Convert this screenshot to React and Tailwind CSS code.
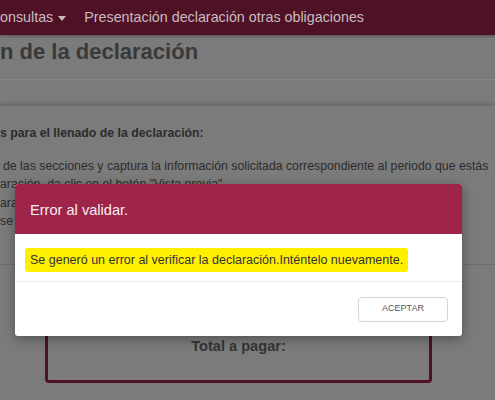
const FONT = "font-['Liberation_Sans',Arial,sans-serif]";

function Navbar() {
  return (
    <nav className="flex h-[35px] items-center bg-[#4f1126] text-[14.3px] text-[#c9bcc0] shadow-[0_1px_3px_rgba(0,0,0,0.35)]">
      <span className="flex items-center">
        onsultas
        <span className="ml-[5px] mt-[1px] h-0 w-0 border-x-[4px] border-t-[5px] border-x-transparent border-t-[#c9bcc0]" />
      </span>
      <span className="ml-[18px]">Presentación declaración otras obligaciones</span>
    </nav>
  );
}

function ErrorModal() {
  return (
    <div className="absolute left-[15px] top-[184px] w-[447px] overflow-hidden rounded-[3px] bg-white shadow-[0_3px_12px_rgba(0,0,0,0.35)]">
      <div className="flex h-[50px] items-center bg-[#9e2449] pl-[15px] pt-[3px] text-[14.6px] text-[#f7eef1]">
        Error al validar.
      </div>
      <div className="flex h-[48px] items-center border-b border-[#ececec] pl-[10px] pt-[5px]">
        <span className="rounded-[3px] bg-[#fff000] px-[5px] py-[3px] text-[12.5px] text-[#333]">
          Se generó un error al verificar la declaración.Inténtelo nuevamente.
        </span>
      </div>
      <div className="flex h-[54px] items-center justify-end pr-[14px]">
        <button className="h-[25px] w-[90px] rounded-[4px] border border-[#d4d4d4] bg-white text-[9px] uppercase text-[#555]">
          Aceptar
        </button>
      </div>
    </div>
  );
}

export default function App() {
  return (
    <div className={`relative h-[400px] w-[495px] overflow-hidden bg-[#7b7b7b] ${FONT}`}>
      <Navbar />

      <h1 className="mt-[3px] text-[22px] font-bold leading-[28px] text-[#393939]">n de la declaración</h1>
      <div className="mt-[13px] h-[26px] border-t border-[#868686]" />

      {/* card */}
      <section className="border-y border-[#6c6c6c] shadow-[0_-2px_3px_rgba(0,0,0,0.12)] pb-[33px] pt-[18px] text-[12.3px] leading-[18.5px] text-[#2c2c2c]">
        <p className="font-bold">s para el llenado de la declaración:</p>
        <p className="mt-[14px] pl-[3px] whitespace-nowrap">de las secciones y captura la información solicitada correspondiente al periodo que estás</p>
        <p className="whitespace-nowrap">aración, da clic en el botón "Vista previa".</p>
        <p className="whitespace-nowrap">aración en formato PDF.</p>
        <p className="whitespace-nowrap">se genera la línea de captura.</p>
      </section>

      <div className="mx-[45px] mt-[30px] flex h-[88px] w-[387px] justify-center rounded-[4px] border-[3px] border-[#4f1126] pt-[38px]">
        <span className="text-[14.6px] font-bold text-[#343434]">Total a pagar:</span>
      </div>

      <ErrorModal />
    </div>
  );
}
